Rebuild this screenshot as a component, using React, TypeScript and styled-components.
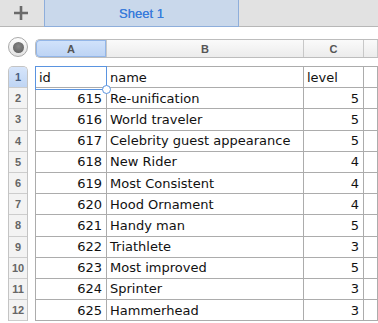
import styled, { createGlobalStyle } from "styled-components";

const GlobalStyle = createGlobalStyle`
  body {
    margin: 0;
    background: #fff;
    font-family: "DejaVu Sans", Verdana, sans-serif;
  }
`;

const rows: [number, string, number][] = [
  [615, "Re-unification", 5],
  [616, "World traveler", 5],
  [617, "Celebrity guest appearance", 5],
  [618, "New Rider", 4],
  [619, "Most Consistent", 4],
  [620, "Hood Ornament", 4],
  [621, "Handy man", 5],
  [622, "Triathlete", 3],
  [623, "Most improved", 5],
  [624, "Sprinter", 3],
  [625, "Hammerhead", 3],
];

const COLS = "71px 197px 60px 1fr";
const ROW_H = "21.2px";

const TabBar = styled.div`
  display: flex;
  height: 26px;
  background: #e2e2e2;
  border-bottom: 1px solid #b7b7b7;
`;

const AddButton = styled.div`
  width: 44px;
  display: flex;
  align-items: center;
  justify-content: center;
  padding-right: 3px;
  box-sizing: border-box;
`;

const SheetTab = styled.div`
  width: 193px;
  margin-bottom: -1px;
  display: flex;
  align-items: center;
  justify-content: center;
  background: #c9d8eb;
  border-left: 1px solid #8eaedb;
  border-right: 1px solid #8eaedb;
  border-bottom: 1px solid #8eaedb;
  color: #3a7cdb;
  font-family: "Liberation Sans", Arial, sans-serif;
  font-size: 13px;
  text-shadow: 0 0 0.4px #3a7cdb;
`;

const Sheet = styled.div`
  display: grid;
  grid-template-columns: 20px 1fr;
  column-gap: 7px;
  row-gap: 8px;
  padding: 12px 0 0 8px;
`;

const SelectAll = styled.div`
  width: 20px;
  height: 20px;
  margin-top: -2px;
  box-sizing: border-box;
  border-radius: 50%;
  border: 1px solid #a9a9a9;
  background: linear-gradient(#fdfdfd, #e2e2e2);
  display: flex;
  align-items: center;
  justify-content: center;
  &::after {
    content: "";
    width: 11px;
    height: 11px;
    border-radius: 50%;
    background: radial-gradient(circle at 50% 40%, #888, #5a5a5a);
  }
`;

const ColumnHeaders = styled.div`
  display: grid;
  grid-template-columns: ${COLS};
  height: 17px;
  border: 1px solid #bdbdbd;
  border-right: none;
  border-radius: 5px 0 0 5px;
  background: linear-gradient(#fafafa, #ececec);
  font-family: "Liberation Sans", Arial, sans-serif;
  font-weight: bold;
  font-size: 11px;
  color: #555;
`;

const ColHead = styled.div<{ $active?: boolean }>`
  display: flex;
  align-items: center;
  justify-content: center;
  border-right: 1px solid #c8c8c8;
  background: ${(p) => (p.$active ? "linear-gradient(#d2e3fb, #bcd3f4)" : "transparent")};
  border-radius: ${(p) => (p.$active ? "4px 0 0 4px" : "0")};
  box-shadow: ${(p) => (p.$active ? "inset 0 0 0 1px #93b6e8" : "none")};
`;

const RowHeaders = styled.div`
  display: grid;
  grid-auto-rows: ${ROW_H};
  border: 1px solid #c4c4c4;
  border-bottom: none;
  border-radius: 5px 5px 0 0;
  background: #f3f3f3;
  font-family: "Liberation Sans", Arial, sans-serif;
  font-weight: bold;
  font-size: 11px;
  color: #666;
  overflow: hidden;
`;

const RowHead = styled.div<{ $active?: boolean }>`
  display: flex;
  align-items: center;
  justify-content: center;
  border-bottom: 1px solid #cdcdcd;
  background: ${(p) => (p.$active ? "linear-gradient(#d6e5fb, #bfd5f4)" : "transparent")};
  color: ${(p) => (p.$active ? "#4a5f80" : "#666")};
`;

const Cells = styled.div`
  position: relative;
  display: grid;
  grid-template-columns: ${COLS};
  grid-auto-rows: ${ROW_H};
  border-top: 1px solid #acacac;
  border-left: 1px solid #acacac;
  font-size: 13px;
  color: #111;
`;

const Cell = styled.div<{ $align?: "left" | "right" }>`
  display: flex;
  align-items: center;
  justify-content: ${(p) => (p.$align === "right" ? "flex-end" : "flex-start")};
  padding: 0 4px 0 3px;
  border-right: 1px solid #acacac;
  border-bottom: 1px solid #acacac;
  white-space: nowrap;
  overflow: hidden;
`;

const Selection = styled.div`
  position: absolute;
  left: -1px;
  top: -1px;
  width: 72px;
  height: 24px;
  box-sizing: border-box;
  border: 1px solid #5a94e0;
  pointer-events: none;
  &::after {
    content: "";
    position: absolute;
    right: -5px;
    bottom: -5px;
    width: 7px;
    height: 7px;
    border-radius: 50%;
    background: #fff;
    border: 1px solid #5a94e0;
  }
`;

function PlusIcon() {
  return (
    <svg width="16" height="16" viewBox="0 0 16 16">
      <path d="M8 1v14M1 8h14" stroke="#6a6a6a" strokeWidth="2.6" />
    </svg>
  );
}

function App() {
  const all: [string | number, string, string | number][] = [["id", "name", "level"], ...rows];
  return (
    <>
      <GlobalStyle />
      <TabBar>
        <AddButton>
          <PlusIcon />
        </AddButton>
        <SheetTab>Sheet 1</SheetTab>
      </TabBar>
      <Sheet>
        <SelectAll />
        <ColumnHeaders>
          <ColHead $active>A</ColHead>
          <ColHead>B</ColHead>
          <ColHead>C</ColHead>
          <ColHead />
        </ColumnHeaders>
        <RowHeaders>
          {all.map((_, i) => (
            <RowHead key={i} $active={i === 0}>
              {i + 1}
            </RowHead>
          ))}
        </RowHeaders>
        <Cells>
          {all.map(([id, name, level], i) => [
            <Cell key={`a${i}`} $align={i === 0 ? "left" : "right"}>{id}</Cell>,
            <Cell key={`b${i}`}>{name}</Cell>,
            <Cell key={`c${i}`} $align={i === 0 ? "left" : "right"}>{level}</Cell>,
            <Cell key={`d${i}`} />,
          ])}
          <Selection />
        </Cells>
      </Sheet>
    </>
  );
}

export default App;
